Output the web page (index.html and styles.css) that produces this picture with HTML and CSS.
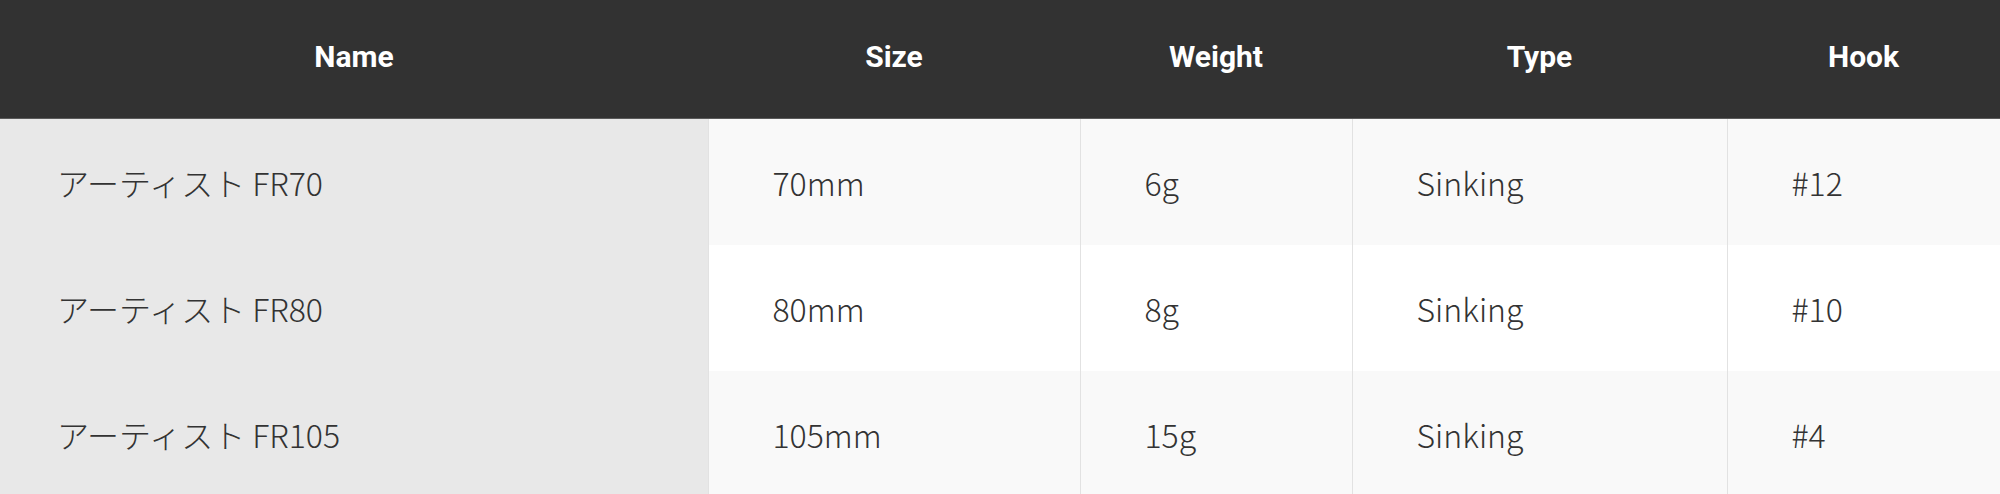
FILE: index.html
```html
<!DOCTYPE html>
<html lang="ja">
  <head>
    <meta charset="UTF-8" />
    <meta name="viewport" content="width=device-width, initial-scale=1.0" />
    <title>Spec</title>
    <link rel="stylesheet" href="styles.css">
  </head>
  <body>
    <table class="spec-table">
      <colgroup>
        <col class="col-name" />
        <col class="col-size" />
        <col class="col-weight" />
        <col class="col-type" />
        <col class="col-hook" />
      </colgroup>
      <thead>
        <tr>
          <th>Name</th>
          <th>Size</th>
          <th>Weight</th>
          <th>Type</th>
          <th>Hook</th>
        </tr>
      </thead>
      <tbody>
        <tr>
          <td class="name">アーティスト FR70</td>
          <td>70mm</td>
          <td>6g</td>
          <td>Sinking</td>
          <td>#12</td>
        </tr>
        <tr>
          <td class="name">アーティスト FR80</td>
          <td>80mm</td>
          <td>8g</td>
          <td>Sinking</td>
          <td>#10</td>
        </tr>
        <tr>
          <td class="name">アーティスト FR105</td>
          <td>105mm</td>
          <td>15g</td>
          <td>Sinking</td>
          <td>#4</td>
        </tr>
      </tbody>
    </table>
  </body>
</html>
```

FILE: styles.css
```css
body {
  margin: 0;
  background-color: white;
}
.spec-table {
  width: 2000px;
  border-collapse: collapse;
  table-layout: fixed;
}
.col-name {
  width: 708px;
}
.col-size {
  width: 372px;
}
.col-weight {
  width: 272px;
}
.col-type {
  width: 375px;
}
.col-hook {
  width: 273px;
}

/* !--- HEADER ------ */
.spec-table th {
  height: 112px;
  padding: 0 0 6px 0;
  background-color: #323232;
  border-bottom: 1px solid #5a5a5a;
  color: white;
  font-family: Roboto, "Liberation Sans", sans-serif;
  font-weight: 700;
  font-size: 30px;
  text-align: center;
}

/* !--- BODY ------ */
.spec-table td {
  height: 126px;
  padding: 0 0 0 64px;
  background-color: #f9f9f9;
  border-left: 1px solid #e2e2e2;
  color: #333;
  font-family: "Noto Sans CJK JP", "Noto Sans", sans-serif;
  font-weight: 300;
  font-size: 32px;
  text-align: left;
}
.spec-table tbody tr:nth-child(2) td:not(.name) {
  background-color: white;
}
.spec-table td.name {
  padding-left: 57px;
  background-color: #e8e8e8;
  border-left: none;
}
```
